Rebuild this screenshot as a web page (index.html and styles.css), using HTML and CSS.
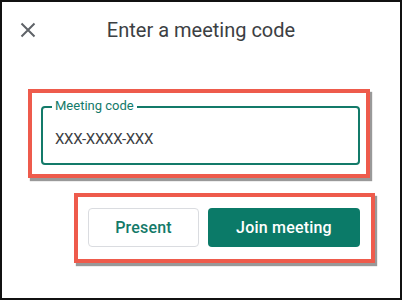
FILE: index.html
```html
<!DOCTYPE html>
<html>
<head>
<meta charset="utf-8">
<link rel="stylesheet" href="styles.css">
</head>
<body>
<div class="frame">
  <div class="header">
    <svg class="close" width="16" height="16" viewBox="0 0 16 16" aria-hidden="true">
      <path d="M1.5 1.5 L14.5 14.5 M14.5 1.5 L1.5 14.5" stroke="#5f6368" stroke-width="2" fill="none"/>
    </svg>
    <div class="title">Enter a meeting code</div>
    <div></div>
  </div>
  <div class="callout callout-input">
    <div class="field">
      <span class="field-label">Meeting code</span>
      <div class="field-value">XXX-XXXX-XXX</div>
    </div>
  </div>
  <div class="callout callout-buttons">
    <button class="btn btn-outline">Present</button>
    <button class="btn btn-fill">Join meeting</button>
  </div>
</div>
</body>
</html>
```
FILE: styles.css
```css
* { box-sizing: border-box; }
html, body { margin: 0; padding: 0; background: #fff; }
body { font-family: Roboto, "Noto Sans", Arial, sans-serif; }
.frame {
  width: 402px;
  height: 300px;
  border: 2px solid #111;
  display: flex;
  flex-direction: column;
  overflow: hidden;
}
.header {
  height: 56px;
  display: grid;
  grid-template-columns: 1fr auto 1fr;
  align-items: center;
  padding: 0 18px;
}
.close { display: block; }
.title {
  font-size: 20px;
  color: #3c4043;
  letter-spacing: 0;
}
.callout {
  border: 4px solid #ee5b4c;
  box-shadow: 2px 3px 1px rgba(70, 70, 70, 0.55);
}
.callout-input {
  margin: 31px 0 0 26px;
  width: 342px;
  height: 89px;
  padding: 13px 6px 9px 9px;
}
.field {
  position: relative;
  height: 59px;
  border: 2px solid #137a69;
  border-radius: 4px;
  padding: 21px 0 0 12px;
}
.field-label {
  position: absolute;
  top: -10px;
  left: 9px;
  padding: 0 3px;
  background: #fff;
  color: #137a69;
  font-size: 13px;
  line-height: 16px;
}
.field-value {
  font-size: 15px;
  line-height: 20px;
  color: #3c4043;
  letter-spacing: -0.3px;
}
.callout-buttons {
  margin: 15px 0 0 72px;
  width: 301px;
  height: 70px;
  padding: 11px 11px 12px 10px;
  display: flex;
  gap: 9px;
}
.btn {
  font-family: Roboto, "Noto Sans", Arial, sans-serif;
  font-size: 16px;
  font-weight: 500;
  height: 39px;
  border-radius: 4px;
  padding: 0;
  letter-spacing: 0.2px;
}
.btn-outline {
  width: 111px;
  background: #fff;
  border: 1px solid #dadce0;
  color: #137a69;
}
.btn-fill {
  width: 152px;
  background: #0b7a68;
  border: none;
  color: #fff;
}
```
